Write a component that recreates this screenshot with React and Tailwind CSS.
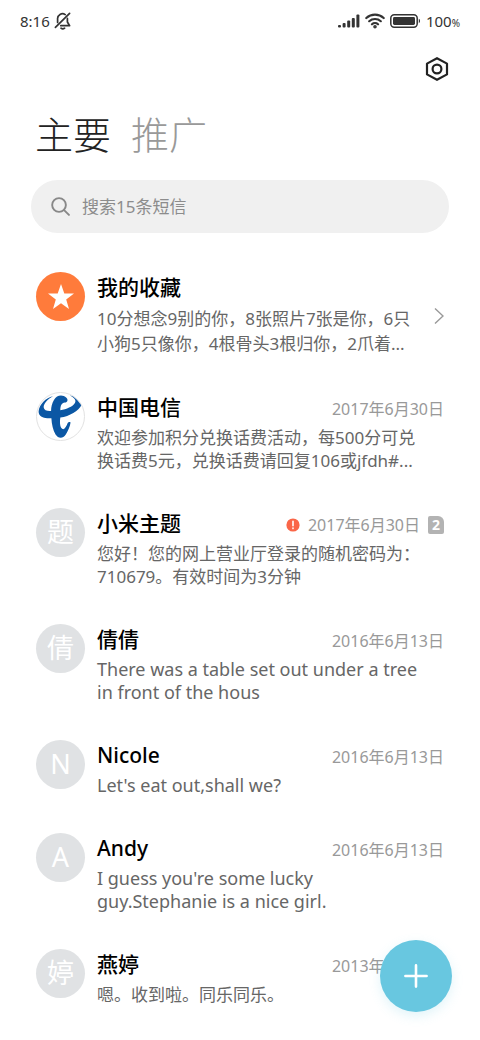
import React, { useState } from 'react';

const messages = [
  {
    id: 1,
    name: '中国电信',
    avatar: 'telecom',
    date: '2017年6月30日',
    lines: ['欢迎参加积分兑换话费活动，每500分可兑', '换话费5元，兑换话费请回复106或jfdh#...'],
  },
  {
    id: 2,
    name: '小米主题',
    avatar: '题',
    date: '2017年6月30日',
    failed: true,
    sim: 2,
    lines: ['您好！您的网上营业厅登录的随机密码为：', '710679。有效时间为3分钟'],
  },
  {
    id: 3,
    name: '倩倩',
    avatar: '倩',
    date: '2016年6月13日',
    latin: true,
    lines: ['There was a table set out under a tree', 'in front of the hous'],
  },
  {
    id: 4,
    name: 'Nicole',
    avatar: 'N',
    date: '2016年6月13日',
    latin: true,
    lines: ["Let's eat out,shall we?"],
  },
  {
    id: 5,
    name: 'Andy',
    avatar: 'A',
    date: '2016年6月13日',
    latin: true,
    lines: ["I guess you're some lucky", 'guy.Stephanie is a nice girl.'],
  },
  { id: 6, name: '燕婷', avatar: '婷', date: '2013年6月13日', lines: ['嗯。收到啦。同乐同乐。'] },
];

const MutedBellIcon = () => (
  <svg className="h-[18px] w-[18px]" viewBox="0 0 18 18" fill="none" stroke="#333" strokeWidth="1.7" strokeLinecap="round" strokeLinejoin="round">
    <path d="M3.6 10.5V7a4.9 4.9 0 0 1 7.6-4.4M13.4 6.4V10l2.2 3.7H6.8" />
    <path d="M15.6 1.4 1.4 15.4" />
    <path d="M7 16.2q1.8 1.4 3.6 0" />
  </svg>
);

const SignalIcon = () => (
  <svg className="h-4 w-[22px]" viewBox="0 0 22 16" fill="#333">
    <rect x="0" y="12" width="3" height="2.6" rx="1" />
    <rect x="4.6" y="10" width="3" height="4.6" rx="1" />
    <rect x="9.2" y="7.5" width="3" height="7.1" rx="1" />
    <rect x="13.8" y="5" width="3" height="9.6" rx="1" />
    <rect x="18.4" y="1.6" width="3" height="13" rx="1" />
  </svg>
);

const WifiIcon = () => (
  <svg className="h-4 w-5" viewBox="0 0 20 16" fill="none" stroke="#333" strokeWidth="2.2" strokeLinecap="round">
    <path d="M1.3 5a13 13 0 0 1 17.4 0M4.2 8.2a8.7 8.7 0 0 1 11.6 0M7 11.3a4.4 4.4 0 0 1 6 0" />
    <circle cx="10" cy="13.8" r="0.7" fill="#333" />
  </svg>
);

const BatteryIcon = () => (
  <svg className="h-[14px] w-[31px]" viewBox="0 0 31 14">
    <rect x="0.8" y="0.8" width="26.4" height="12.4" rx="3.4" fill="none" stroke="#333" strokeWidth="1.5" />
    <rect x="3" y="3" width="22" height="8" rx="1.4" fill="#333" />
    <path d="M28.8 4.8c1.6.6 1.6 3.8 0 4.4z" fill="#333" />
  </svg>
);

const TelecomLogo = () => (
  <svg className="size-full" viewBox="0 0 147 147" fill="#0b57a4">
    <path d="M50 10C28 14 7 36 5 57C4 74 22 80 45 79C46 98 50 117 58 130C66 142 80 145 90 130C97 118 103 106 105 92C101 89 98 91 96 94C92 104 88 112 82 113C73 113 70 96 73 77C102 72 130 58 140 36C142 20 126 9 102 8C118 15 124 24 118 32C111 43 93 50 73 54C73 40 77 31 87 30C96 30 98 21 92 15C80 4 62 6 53 22C47 32 44 44 44 56C32 57 22 54 21 45C20 34 32 20 50 10Z" />
  </svg>
);

const Avatar = ({ kind }) => {
  if (kind === 'telecom') {
    return (
      <div className="size-[49px] shrink-0 overflow-hidden rounded-full border border-[#e2e2e2]">
        <TelecomLogo />
      </div>
    );
  }
  return (
    <div className="flex size-[49px] shrink-0 items-center justify-center rounded-full bg-[#e0e2e4] text-[27px] text-white">
      {kind}
    </div>
  );
};

const MessageRow = ({ message }) => (
  <li className="flex gap-3">
    <Avatar kind={message.avatar} />
    <div className="min-w-0 flex-1">
      <div className="flex h-[30px] items-center justify-between">
        <h2 className="text-[21px] font-medium leading-[30px] text-black">{message.name}</h2>
        <div className="flex items-center gap-2 pt-1 text-base leading-6 text-[#999]">
          {message.failed && (
            <svg className="size-[14px]" viewBox="0 0 14 14" role="img" aria-label="发送失败">
              <circle cx="7" cy="7" r="6.6" fill="#fa6648" />
              <path d="M7 3.2v4.6M7 10v.6" stroke="#fff" strokeWidth="1.6" strokeLinecap="round" />
            </svg>
          )}
          <time>{message.date}</time>
          {message.sim && (
            <span className="flex h-[18px] w-4 items-center justify-center rounded-xs rounded-tr-md bg-[#b3b3b3] text-sm font-bold text-white">
              {message.sim}
            </span>
          )}
        </div>
      </div>
      <p className={`mt-1 whitespace-nowrap text-[#666] ${message.latin ? 'text-lg leading-[23px]' : 'text-[17px] leading-[23px]'}`}>
        {message.lines.map((line) => (
          <span key={line} className="block">{line}</span>
        ))}
      </p>
    </div>
  </li>
);

const App = () => {
  const [tab, setTab] = useState('main');
  const [query, setQuery] = useState('');

  return (
    <div lang="zh-CN" className="relative bg-white font-['Noto_Sans','Noto_Sans_CJK_SC',sans-serif]">
      <div className="flex h-[42px] items-center justify-between px-5 text-[15px] text-[#333]">
        <div className="flex items-center gap-1">
          <span>8:16</span>
          <MutedBellIcon />
        </div>
        <div className="flex items-center gap-[5px]">
          <SignalIcon />
          <WifiIcon />
          <BatteryIcon />
          <span>100<span className="text-[10px]">%</span></span>
        </div>
      </div>

      <header className="px-[35px]">
        <div className="flex h-[54px] items-center justify-end">
          <button type="button" aria-label="设置" className="-mr-1">
            <svg className="size-6" viewBox="0 0 24 24" fill="none" stroke="#222" strokeWidth="2.2" strokeLinejoin="round">
              <path d="M12 1.2 22 6.6v10.8L12 22.8 2 17.4V6.6z" />
              <circle cx="12" cy="12" r="4.4" />
            </svg>
          </button>
        </div>
        <nav className="mt-2.5 flex gap-5 text-[38px] font-light leading-[56px]">
          <button type="button" onClick={() => setTab('main')} className={tab === 'main' ? 'text-[#222]' : 'text-[#999]'}>
            主要
          </button>
          <button type="button" onClick={() => setTab('promo')} className={tab === 'promo' ? 'text-[#222]' : 'text-[#999]'}>
            推广
          </button>
        </nav>
      </header>

      <label className="mx-[31px] mt-[18px] flex h-[53px] items-center gap-3 rounded-full bg-[#f0f0f0] px-5">
        <svg className="size-[19px] shrink-0" viewBox="0 0 18 18" fill="none" stroke="#888" strokeWidth="1.8" strokeLinecap="round">
          <circle cx="7.6" cy="7.6" r="6.5" />
          <path d="m12.4 12.4 4.6 4.6" />
        </svg>
        <input
          type="text"
          aria-label="搜索短信"
          value={query}
          onChange={(e) => setQuery(e.target.value)}
          placeholder="搜索15条短信"
          className="min-w-0 flex-1 bg-transparent text-[17px] outline-none placeholder:text-[#8c8c8c]"
        />
      </label>

      <ul className="flex flex-col gap-9 px-9 pb-9 pt-[39px]">
        <li className="flex gap-3">
          <div className="flex size-[49px] shrink-0 items-center justify-center rounded-full bg-[#ff7b3b]">
            <svg className="size-7" viewBox="0 0 28 28" fill="#fff">
              <path d="M14 1l3.3 9.4 9.7.2-7.8 6L22 26l-8-5.7L6 26l2.8-9.4-7.8-6 9.7-.2z" />
            </svg>
          </div>
          <div className="min-w-0 flex-1">
            <h2 className="text-[21px] font-medium leading-[30px] text-black">我的收藏</h2>
            <p className="mt-1 whitespace-nowrap text-[17px] leading-[25px] text-[#666]">
              <span className="block">10分想念9别的你，8张照片7张是你，6只</span>
              <span className="block">小狗5只像你，4根骨头3根归你，2爪着...</span>
            </p>
          </div>
          <svg className="mt-9 h-4 w-[10px] shrink-0" viewBox="0 0 10 16" fill="none" stroke="#999" strokeWidth="1.4">
            <path d="M1 0.5 9 8 1 15.5" />
          </svg>
        </li>
        {messages.map((message) => (
          <MessageRow key={message.id} message={message} />
        ))}
      </ul>

      <button
        type="button"
        aria-label="新建短信"
        className="fixed bottom-7 right-7 flex size-[72px] items-center justify-center rounded-full bg-[#68c7e0] shadow-[0_4px_12px_rgba(104,199,224,0.2)]"
      >
        <svg className="size-6" viewBox="0 0 24 24" stroke="#fff" strokeWidth="2.6" strokeLinecap="round">
          <path d="M12 1.4v21.2M1.4 12h21.2" />
        </svg>
      </button>
    </div>
  );
};

export default App;
